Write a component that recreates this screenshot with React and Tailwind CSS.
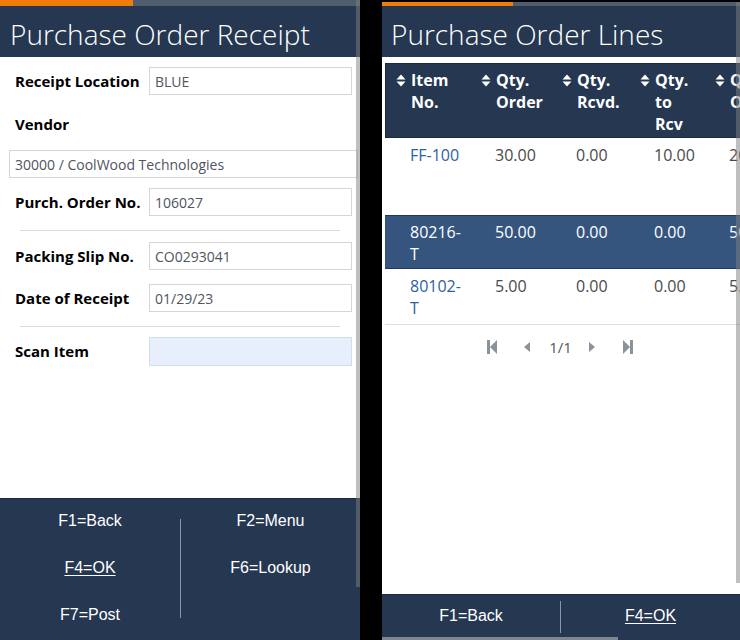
import React from 'react'

const SANS = { fontFamily: '"Open Sans", "Liberation Sans", sans-serif' }

function SortIcon() {
  return (
    <svg width="10" height="13" viewBox="0 0 10 13" className="mr-[5px] mt-[5px] shrink-0">
      <path d="M0.5 5.5 L5 0.5 L9.5 5.5 Z" fill="#fff" />
      <path d="M0.5 7.5 L9.5 7.5 L5 12.5 Z" fill="#fff" />
    </svg>
  )
}

function FormRow({ label, value, scan }) {
  return (
    <div className="flex items-center pl-[15px]">
      <div className="w-[134px] text-[15px] font-bold text-black">{label}</div>
      <div
        className={`w-[203px] h-[28px] border flex items-center px-[5px] text-[14px] text-[#505560] ${
          scan ? 'bg-[#e6effb] border-[#d3dcea] h-[29px]' : 'bg-white border-[#d6d6d6]'
        }`}>
        {value}
      </div>
    </div>
  )
}

const COLS = [85, 81, 78, 75, 80]

const HEADERS = [
  ['Item', 'No.'],
  ['Qty.', 'Order'],
  ['Qty.', 'Rcvd.'],
  ['Qty.', 'to', 'Rcv'],
  ['Qty.', 'On'],
]

const ROWS = [
  { cells: [['FF-100'], '30.00', '0.00', '10.00', '20.00'], h: 'h-[77px]' },
  { cells: [['80216-', 'T'], '50.00', '0.00', '0.00', '50.00'], h: 'h-[54px]', sel: true },
  { cells: [['80102-', 'T'], '5.00', '0.00', '0.00', '5.00'], h: 'h-[56px]' },
]

function LeftScreen() {
  return (
    <div className="relative w-[360px] h-[640px] flex flex-col shrink-0 bg-white" style={SANS}>
      {/* progress strip */}
      <div className="flex h-[6px]">
        <div className="w-[133px] bg-[#f07c0c]" />
        <div className="flex-1 bg-[#4f5d6f]" />
      </div>
      <div className="h-[51px] bg-[#253751] flex items-center pl-[10px]">
        <h1 className="text-white text-[28px] font-light leading-none mt-[5px]">Purchase Order Receipt</h1>
      </div>

      <div className="flex-1 flex flex-col">
        <div className="mt-[10px]"><FormRow label="Receipt Location" value="BLUE" /></div>
        <div className="mt-[15px] pl-[15px] h-[28px] flex items-center text-[15px] font-bold text-black">Vendor</div>
        <div className="mt-[12px] ml-[9px] mr-[2px] h-[28px] border border-[#d6d6d6] flex items-center px-[5px] text-[14px] text-[#505560]">
          30000 / CoolWood Technologies
        </div>
        <div className="mt-[10px]"><FormRow label="Purch. Order No." value="106027" /></div>
        <div className="mt-[14px] mx-[20px] h-px bg-[#dcdcdc]" />
        <div className="mt-[11px]"><FormRow label="Packing Slip No." value="CO0293041" /></div>
        <div className="mt-[14px]"><FormRow label="Date of Receipt" value="01/29/23" /></div>
        <div className="mt-[14px] mx-[20px] h-px bg-[#dcdcdc]" />
        <div className="mt-[10px]"><FormRow label="Scan Item" value="" scan /></div>
      </div>

      <div className="h-[142px] bg-[#253751] border-t border-[#1a2a40] flex text-white text-[16px]" style={{ fontFamily: '"Liberation Sans", Arial, sans-serif' }}>
        <div className="w-[180px] flex flex-col -mt-[2px]">
          <div className="h-[47px] flex items-center justify-center">F1=Back</div>
          <div className="h-[47px] flex items-center justify-center underline underline-offset-2">F4=OK</div>
          <div className="h-[48px] flex items-center justify-center">F7=Post</div>
        </div>
        <div className="w-px bg-[#8b96a6] mt-[20px] h-[99px]" />
        <div className="flex-1 flex flex-col -mt-[2px]">
          <div className="h-[47px] flex items-center justify-center">F2=Menu</div>
          <div className="h-[47px] flex items-center justify-center">F6=Lookup</div>
        </div>
      </div>

      {/* scrollbar */}
      <div className="absolute top-0 right-0 w-[4px] h-[587px] bg-[#808080]/50" />
    </div>
  )
}

function RightScreen() {
  return (
    <div className="relative w-[358px] h-[638px] mt-[2px] flex flex-col shrink-0 bg-white overflow-hidden" style={SANS}>
      <div className="flex h-[4px]">
        <div className="w-[131px] bg-[#f07c0c]" />
        <div className="flex-1 bg-[#4f5d6f]" />
      </div>
      <div className="h-[51px] bg-[#253751] flex items-center pl-[9px]">
        <h1 className="text-white text-[28px] font-light leading-none mt-[5px]">Purchase Order Lines</h1>
      </div>

      <div className="flex-1 flex flex-col pt-[6px]">
        <div className="ml-[3px] overflow-hidden">
          <div className="w-[420px]">
            {/* header */}
            <div className="flex h-[75px] bg-[#253751] border border-[#1b2a40] pt-[5px] text-white text-[16px] font-bold leading-[22px]">
              {HEADERS.map((lines, i) => (
                <div key={i} className="flex pl-[10px] shrink-0" style={{ width: COLS[i] }}>
                  <SortIcon />
                  <div>
                    {lines.map(l => <div key={l}>{l}</div>)}
                  </div>
                </div>
              ))}
            </div>
            {/* rows */}
            {ROWS.map((row, r) => (
              <div
                key={r}
                className={`flex pt-[5px] text-[16px] leading-[22px] ${row.h} ${
                  row.sel ? 'bg-[#35557f] border-y border-[#22385a] text-white' : 'text-[#4a4a4a] pt-[6px]'
                } ${r === ROWS.length - 1 ? 'border-b border-[#dedede]' : ''}`}>
                {row.cells.map((c, i) => (
                  <div key={i} className="pl-[25px] shrink-0" style={{ width: COLS[i] }}>
                    {Array.isArray(c)
                      ? c.map(l => <div key={l} className={row.sel ? '' : 'text-[#2f5f9e]'}>{l}</div>)
                      : c}
                  </div>
                ))}
              </div>
            ))}
          </div>
        </div>

        {/* pager */}
        <div className="mt-[13px] h-[18px] flex items-center justify-center pr-[2px] text-[15px] text-[#555]">
          <svg width="10" height="14" viewBox="0 0 10 14">
            <rect x="0" y="0" width="3" height="14" fill="#8a929c" />
            <path d="M10 0 L3 7 L10 14 Z" fill="#8a929c" />
          </svg>
          <svg width="6" height="10" viewBox="0 0 6 10" className="ml-[27px]">
            <path d="M6 0 L0 5 L6 10 Z" fill="#8a929c" />
          </svg>
          <span className="ml-[19px]">1/1</span>
          <svg width="6" height="10" viewBox="0 0 6 10" className="ml-[17px]">
            <path d="M0 0 L6 5 L0 10 Z" fill="#8a929c" />
          </svg>
          <svg width="10" height="14" viewBox="0 0 10 14" className="ml-[28px]">
            <path d="M0 0 L7 7 L0 14 Z" fill="#8a929c" />
            <rect x="7" y="0" width="3" height="14" fill="#8a929c" />
          </svg>
        </div>
      </div>

      <div className="h-[43px] bg-[#253751] border-t border-[#1a2a40] flex text-white text-[16px]" style={{ fontFamily: '"Liberation Sans", Arial, sans-serif' }}>
        <div className="w-[178px] flex items-center justify-center">F1=Back</div>
        <div className="w-px bg-[#8b96a6] mt-[6px] h-[32px]" />
        <div className="flex-1 flex items-center justify-center underline underline-offset-2">F4=OK</div>
      </div>
      <div className="h-[3px] bg-[#253751] flex">
        <div className="w-[236px] bg-[#7d8591]" />
      </div>

      {/* scrollbar */}
      <div className="absolute top-0 right-0 w-[4px] h-[581px] bg-[#808080]/50" />
    </div>
  )
}

export default function App() {
  return (
    <div className="w-[740px] h-[640px] bg-black flex overflow-hidden">
      <LeftScreen />
      <div className="w-[22px] shrink-0" />
      <RightScreen />
    </div>
  )
}
